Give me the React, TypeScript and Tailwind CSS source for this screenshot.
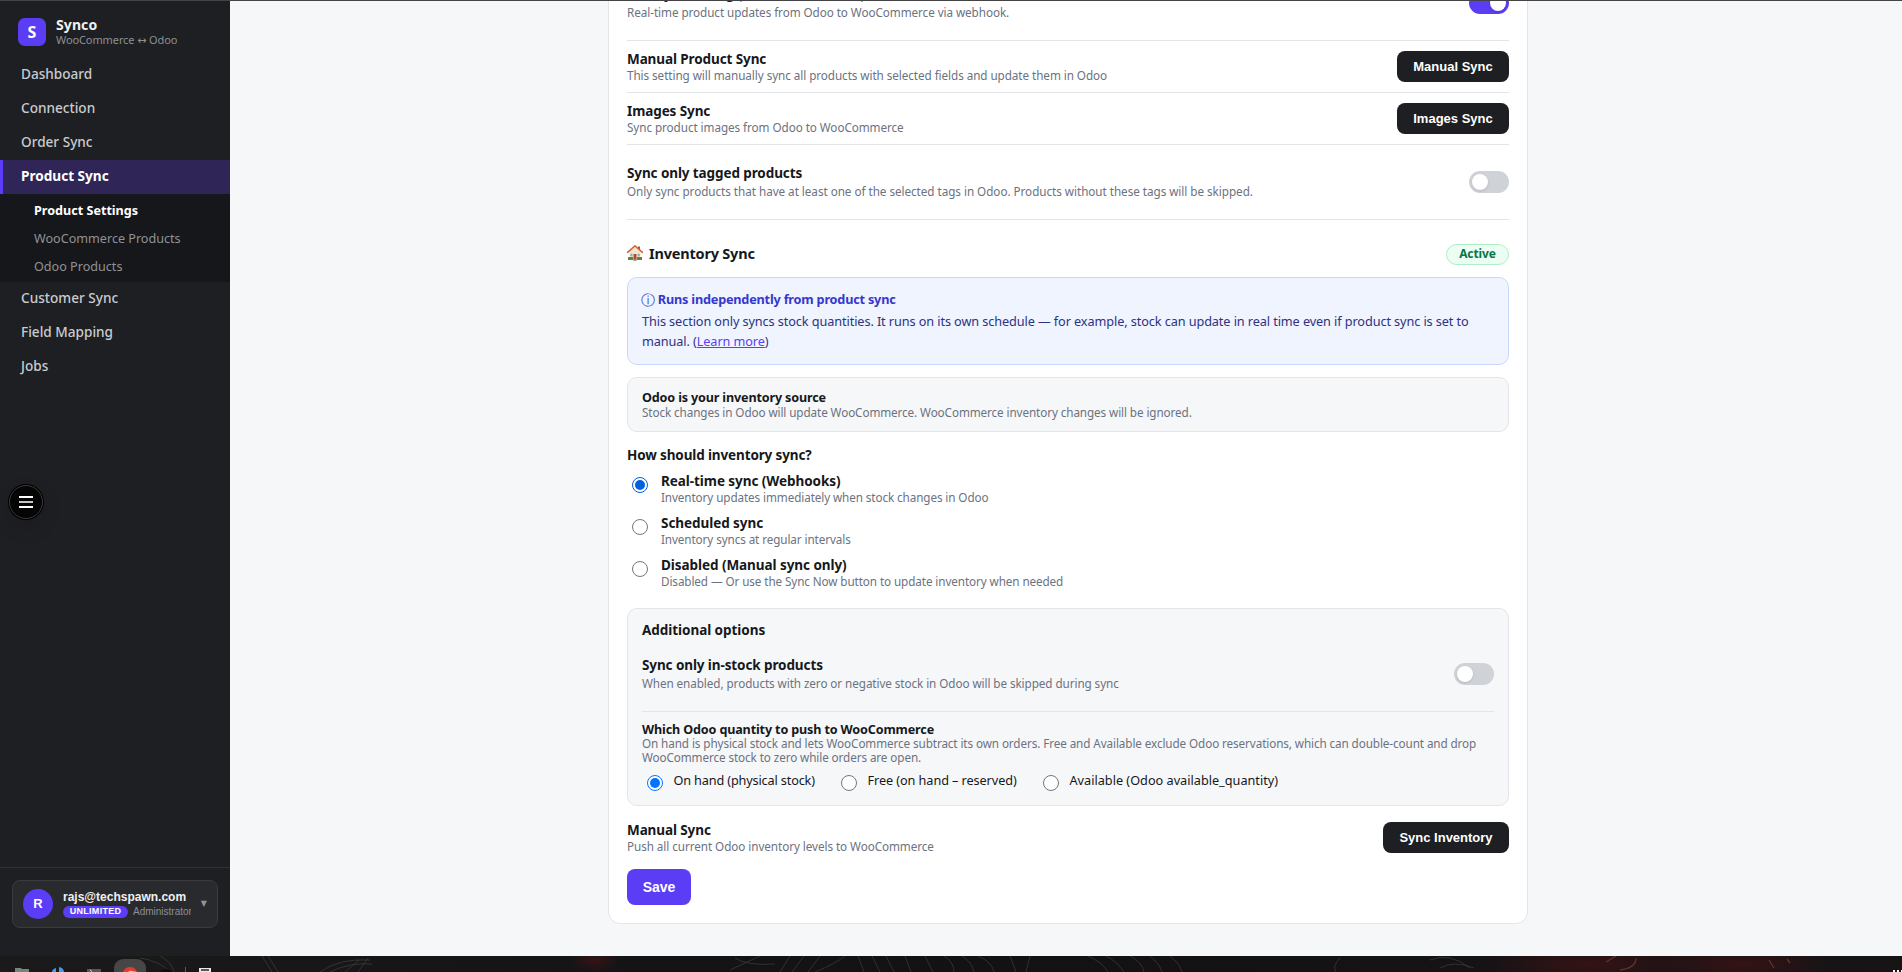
import React from 'react';

const Toggle: React.FC<{ on?: boolean }> = ({ on }) => (
    <span className={`flex h-[22px] w-10 shrink-0 items-center rounded-full px-[3px] ${on ? 'justify-end bg-[#5b3df5]' : 'bg-[#cfd2d6]'}`}>
        <span className="size-4 rounded-full bg-white shadow-sm"></span>
    </span>
);

const Radio: React.FC<{ checked?: boolean; color?: string }> = ({ checked, color = 'border-[#0060df] text-[#0060df]' }) => (
    <span className={`flex size-4 shrink-0 items-center justify-center rounded-full border bg-white ${checked ? color : 'border-[#767676]'}`}>
        {checked && <span className="size-2.5 rounded-full bg-current"></span>}
    </span>
);

const DarkButton: React.FC<{ label: string; width: string }> = ({ label, width }) => (
    <button className={`h-[31px] shrink-0 rounded-lg bg-[#1e1f23] font-['Liberation_Sans',Arial,sans-serif] text-[13px] font-bold text-white ${width}`}>
        {label}
    </button>
);

const RowText: React.FC<{ title: string; desc: string; spaced?: boolean; tracking?: string }> = ({ title, desc, spaced, tracking = 'tracking-[-0.06px]' }) => (
    <div className={spaced ? 'pb-px' : ''}>
        <p className="text-[13.5px] leading-[18px] font-bold tracking-[-0.1px] text-[#16181b]">{title}</p>
        <p className={`text-[11.7px] leading-4 text-[#6b7280] ${tracking} ${spaced ? 'mt-px' : '-mt-px'}`}>{desc}</p>
    </div>
);

const NavItem: React.FC<{ label: string; active?: boolean }> = ({ label, active }) => (
    <a className={`flex h-[34px] items-center border-l-[3px] pb-px pl-[18px] text-[13.6px] ${active ? 'border-[#5b3df5] bg-[#2f2657] font-bold text-white' : 'border-transparent font-medium text-[#c9cbcf]'}`}>
        {label}
    </a>
);

const SubItem: React.FC<{ label: string; active?: boolean }> = ({ label, active }) => (
    <a className={`flex h-7 items-center pt-0.5 pl-[34px] text-[12.6px] ${active ? 'font-bold text-white' : 'text-[#909296]'}`}>{label}</a>
);

const SyncMode: React.FC<{ title: string; desc: string; checked?: boolean }> = ({ title, desc, checked }) => (
    <label className="flex gap-[13px] pl-[5px]">
        <span className="pt-1"><Radio checked={checked} /></span>
        <span>
            <span className="block text-[13.5px] leading-[17px] font-bold tracking-[-0.06px] text-[#16181b]">{title}</span>
            <span className="block text-[11.7px] leading-[15px] tracking-[-0.09px] text-[#6b7280]">{desc}</span>
        </span>
    </label>
);

const HouseIcon = () => (
    <svg viewBox="0 0 16 16" className="size-4">
        <path d="M2.5 7 8 2l5.5 5v7.5h-11z" fill="#f3e6c6" />
        <path d="M11 1.5h2v4l-2-2z" fill="#b5532f" />
        <path d="M.6 7.4 8 .9l7.4 6.5" fill="none" stroke="#d4643c" strokeWidth="1.6" strokeLinecap="round" />
        <path d="M6.5 9h3v6h-3z" fill="#b5482f" />
        <path d="M3.3 8.8h2.2v2.4H3.3zM10.6 8.8h2.2v2.4h-2.2z" fill="#7fb2cf" />
        <path d="M1 12h5v3H1zM10 12h5v3h-5z" fill="#64803c" />
        <path d="M6.3 14.6h3.4V16H6.3z" fill="#a5a9ad" />
    </svg>
);

const Sidebar = () => (
    <aside className="relative flex w-[230px] shrink-0 flex-col bg-[#1e1f23]">
        <div className="flex h-[57px] items-center gap-2.5 pt-[5px] pl-[18px]">
            <div className="flex size-7 items-center justify-center rounded-[7px] bg-[#5b3df5] text-[16px] font-bold text-white">S</div>
            <div>
                <p className="text-[14px] leading-4 font-bold tracking-[0.1px] text-[#f0f0f1]">Synco</p>
                <p className="text-[11px] leading-[13px] tracking-[-0.1px] text-[#8c8f94]">
                    WooCommerce <span className="font-['DejaVu_Sans',sans-serif]">↔</span> Odoo
                </p>
            </div>
        </div>
        <nav>
            <NavItem label="Dashboard" />
            <NavItem label="Connection" />
            <NavItem label="Order Sync" />
            <NavItem label="Product Sync" active />
            <div className="bg-[#16171a] py-0.5">
                <SubItem label="Product Settings" active />
                <SubItem label="WooCommerce Products" />
                <SubItem label="Odoo Products" />
            </div>
            <NavItem label="Customer Sync" />
            <NavItem label="Field Mapping" />
            <NavItem label="Jobs" />
        </nav>
        {/* floating menu handle */}
        <button className="absolute top-[483px] left-2 flex size-9 items-center justify-center rounded-full bg-black p-px shadow-[0_8px_20px_rgba(0,0,0,0.12)]">
            <span className="flex size-[34px] flex-col items-center justify-center gap-[3px] rounded-full border border-[#3a3a3a] bg-[#050505]">
                <span className="h-0.5 w-3.5 bg-white"></span>
                <span className="h-0.5 w-3.5 bg-[#c4c4c4]"></span>
                <span className="h-0.5 w-3.5 bg-white"></span>
            </span>
        </button>
        <div className="mt-auto h-[89px] border-t border-[#303135] px-3 pt-3 font-['Liberation_Sans',Arial,sans-serif]">
            <div className="flex h-12 items-center rounded-lg border border-[#3a3b3f] bg-[#292a2e] pr-2.5 pl-2.5">
                <span className="flex size-[30px] items-center justify-center rounded-full bg-[#5b3df5] text-[13px] font-bold text-white">R</span>
                <div className="ml-2.5 w-32">
                    <p className="text-[12px] leading-[14px] font-bold text-[#f0f0f1]">rajs@techspawn.com</p>
                    <div className="mt-0.5 flex items-center gap-[5px] overflow-hidden">
                        <span className="flex h-3 w-[65px] shrink-0 items-center justify-center rounded-full bg-[#5b3df5] text-[9px] font-bold tracking-[0.3px] text-white">UNLIMITED</span>
                        <span className="overflow-hidden text-[10px] leading-3 whitespace-nowrap text-[#8c8f94]">Administrator</span>
                    </div>
                </div>
                <span className="ml-auto font-['DejaVu_Sans',sans-serif] text-[8px] text-[#909296]">▼</span>
            </div>
        </div>
    </aside>
);

const InventorySection = () => (
    <section>
        <div className="mt-6 flex h-[21px] items-center justify-between">
            <h2 className="-mt-[3px] flex items-center gap-1.5 text-[14.5px] leading-5 font-bold tracking-[-0.2px] text-[#16181b]">
                <HouseIcon />
                Inventory Sync
            </h2>
            <span className="flex h-[21px] w-[63px] items-center justify-center rounded-full border border-[#abefc6] bg-[#ecfdf3] pb-px text-[12px] font-bold tracking-[-0.1px] text-[#067647]">Active</span>
        </div>

        <div className="mt-3 rounded-[10px] border border-[#c7d7fe] bg-[#eff4ff] px-3.5 pt-3 pb-[13px] text-[12.7px]">
            <p className="flex h-[19px] items-center gap-[3px] font-bold tracking-[-0.2px] text-[#3538cd]">
                <span className="-ml-px font-['DejaVu_Sans',sans-serif] text-[14px] leading-none font-normal">ⓘ</span> Runs independently from product sync
            </p>
            <p className="mt-[3px] leading-[19.5px] tracking-[-0.09px] whitespace-nowrap text-[#2d3282]">
                This section only syncs stock quantities. It runs on its own schedule — for example, stock can update in real time even if product sync is set to
                <br />
                manual. (<a className="text-[#5b3df5] underline">Learn more</a>)
            </p>
        </div>

        <div className="mt-3 rounded-[10px] border border-[#e3e5e9] bg-[#f6f7f9] px-3.5 pt-3 pb-[11px]">
            <p className="text-[12.6px] leading-[15px] font-bold tracking-[-0.16px] text-[#16181b]">Odoo is your inventory source</p>
            <p className="text-[11.7px] leading-[15px] tracking-[-0.09px] text-[#6b7280]">Stock changes in Odoo will update WooCommerce. WooCommerce inventory changes will be ignored.</p>
        </div>

        <h3 className="mt-[15px] text-[13.5px] leading-[17px] font-bold tracking-[-0.13px] text-[#16181b]">How should inventory sync?</h3>
        <div className="mt-[9px] flex flex-col gap-2.5">
            <SyncMode title="Real-time sync (Webhooks)" desc="Inventory updates immediately when stock changes in Odoo" checked />
            <SyncMode title="Scheduled sync" desc="Inventory syncs at regular intervals" />
            <SyncMode title="Disabled (Manual sync only)" desc="Disabled — Or use the Sync Now button to update inventory when needed" />
        </div>

        <div className="mt-[19px] rounded-[10px] border border-[#e3e5e9] bg-[#f6f7f9] px-3.5 pt-[13px] pb-3.5">
            <h3 className="-mb-0.5 text-[13.5px] leading-[17px] font-bold tracking-[-0.05px] text-[#16181b]">Additional options</h3>
            <div className="flex h-[75px] items-center justify-between border-b border-[#e3e5e9]">
                <RowText spaced title="Sync only in-stock products" desc="When enabled, products with zero or negative stock in Odoo will be skipped during sync" tracking="tracking-[-0.07px]" />
                <Toggle />
            </div>
            <p className="pt-2.5 text-[12.6px] leading-[15px] font-bold tracking-[-0.15px] text-[#16181b]">Which Odoo quantity to push to WooCommerce</p>
            <p className="text-[11.7px] leading-[13.5px] tracking-[-0.09px] whitespace-nowrap text-[#6b7280]">
                On hand is physical stock and lets WooCommerce subtract its own orders. Free and Available exclude Odoo reservations, which can double-count and drop
                <br />
                WooCommerce stock to zero while orders are open.
            </p>
            <div className="mt-[11px] flex h-4 items-center pl-[5px] text-[12.7px] tracking-[-0.08px] text-[#16181b]">
                <label className="flex w-[194px] items-center gap-[10.5px]">
                    <Radio checked color="border-[#0075ff] text-[#0075ff]" />
                    <span className="-mt-1 tracking-[-0.15px] whitespace-nowrap">On hand (physical stock)</span>
                </label>
                <label className="flex w-[202px] items-center gap-[10.5px]">
                    <Radio />
                    <span className="-mt-1 whitespace-nowrap">Free (on hand – reserved)</span>
                </label>
                <label className="flex items-center gap-[10.5px]">
                    <Radio />
                    <span className="-mt-1 tracking-normal whitespace-nowrap">Available (Odoo available_quantity)</span>
                </label>
            </div>
        </div>

        <div className="mt-4 flex h-[31px] items-center justify-between">
            <RowText title="Manual Sync" desc="Push all current Odoo inventory levels to WooCommerce" />
            <DarkButton label="Sync Inventory" width="w-[126px]" />
        </div>
        <button className="mt-4 block h-9 w-16 rounded-lg bg-[#5b3df5] font-['Liberation_Sans',Arial,sans-serif] text-[14px] font-bold text-white">Save</button>
    </section>
);

// strip of the desktop dock under the window
const Dock = () => (
    <footer className="h-4 shrink-0 overflow-hidden bg-linear-to-r from-[#1b1a1a] via-[#121113] to-[#171415]">
        <svg width="1902" height="16" viewBox="0 0 1902 16">
            <defs>
                <radialGradient id="ember">
                    <stop offset="0" stopColor="#4a1216" stopOpacity="0.6" />
                    <stop offset="1" stopColor="#4a1216" stopOpacity="0" />
                </radialGradient>
            </defs>
            <ellipse cx="595" cy="4" rx="25" ry="12" fill="url(#ember)" />
            <ellipse cx="1590" cy="8" rx="110" ry="26" fill="url(#ember)" />
            <ellipse cx="1740" cy="8" rx="90" ry="24" fill="url(#ember)" />
            <path d="M140 2q20 3 30 14M160 0q12 6 14 16M262 0l10 16M268 0l10 16M320 16q20-14 50-12M330 16q20-10 42-8M345 16l14-12M358 16l10-14M735 2q12 8 40 6M760 0l-30 14M790 0l-10 16M804 0l-12 16M820 0l-12 16M845 0q-10 8-30 16M858 0l6 16M872 0l8 16M886 0l8 16M905 0l6 16M925 0l8 16M944 0q10 6 10 16M962 0q10 6 12 16M978 0q14 6 16 16M1010 0l6 16M1030 0l-4 16M1088 0q14 6 20 16M1106 0q12 6 18 16M1130 0q12 6 14 16M1150 0q10 8 12 16M1170 0q10 8 12 16M1340 2q-8 8-4 14M1430 4q20-8 40 8M1440 12q14-8 34 0" fill="none" stroke="#4a4543" strokeWidth="1" opacity="0.6" />
            <path d="M1606 6l10-6M1620 14q16-2 16-12M1769 4l5 8M1787 3l3 4" fill="none" stroke="#7a4030" strokeWidth="1.3" opacity="0.7" />
            <path d="M15 12h6l1 1h7v3H15z" fill="#74877a" />
            <path d="M52 16q0-3 4-4v4zM59 11q5 1 5 5h-5z" fill="#3d9df2" />
            <path d="M87 13h14v3H87z" fill="#55575a" />
            <path d="M90 14l2 1.5" stroke="#ddd" />
            <path d="M114 16V11q2-8 10-8h12q8 0 10 8v5z" fill="#474546" />
            <path d="M123 16q2-5 7-5t7 5z" fill="#e33b2e" />
            <path d="M128 16q2-2 4-1l5 1z" fill="#f7d54a" />
            <path d="M160 16q6-6 12 0z" fill="#0b0b0b" />
            <path d="M185.500 11v5" stroke="#5a5a5a" />
            <path d="M199 12h12v4h-12z" fill="#e8e8e8" />
            <path d="M201 13h8v2h-8z" fill="#55575a" />
            <path d="M1893 14h2v2h-2zM1897 14h2v2h-2zM1901 14h1v2h-1z" fill="#fff" />
        </svg>
    </footer>
);

const App: React.FC = () => (
    <div className="flex h-[972px] w-[1902px] flex-col overflow-hidden bg-[#f6f7f9] font-['Noto_Sans',sans-serif]">
        <div className="h-px shrink-0 bg-[#444446]"></div>
        <div className="flex h-[955px] shrink-0 overflow-hidden">
            <Sidebar />
            <main className="flex grow flex-col items-center overflow-hidden pl-1">
                <div className="-mt-20 w-[920px] shrink-0 rounded-xl border border-[#e3e5e9] bg-white px-[18px] pt-11 pb-[18px]">
                    <div className="flex h-[75px] items-center justify-between border-b border-[#e3e5e9]">
                        <RowText spaced title="Live sync timing (webhook enabled)" desc="Real-time product updates from Odoo to WooCommerce via webhook." />
                        <Toggle on />
                    </div>
                    <div className="flex h-[52px] items-center justify-between border-b border-[#e3e5e9]">
                        <RowText title="Manual Product Sync" desc="This setting will manually sync all products with selected fields and update them in Odoo" />
                        <DarkButton label="Manual Sync" width="w-28" />
                    </div>
                    <div className="flex h-[52px] items-center justify-between border-b border-[#e3e5e9]">
                        <RowText title="Images Sync" desc="Sync product images from Odoo to WooCommerce" />
                        <DarkButton label="Images Sync" width="w-28" />
                    </div>
                    <div className="flex h-[75px] items-center justify-between border-b border-[#e3e5e9]">
                        <RowText
                            spaced
                            title="Sync only tagged products"
                            desc="Only sync products that have at least one of the selected tags in Odoo. Products without these tags will be skipped."
                            tracking="tracking-[-0.035px]"
                        />
                        <Toggle />
                    </div>
                    <InventorySection />
                </div>
            </main>
        </div>
        <Dock />
    </div>
);

export default App;
